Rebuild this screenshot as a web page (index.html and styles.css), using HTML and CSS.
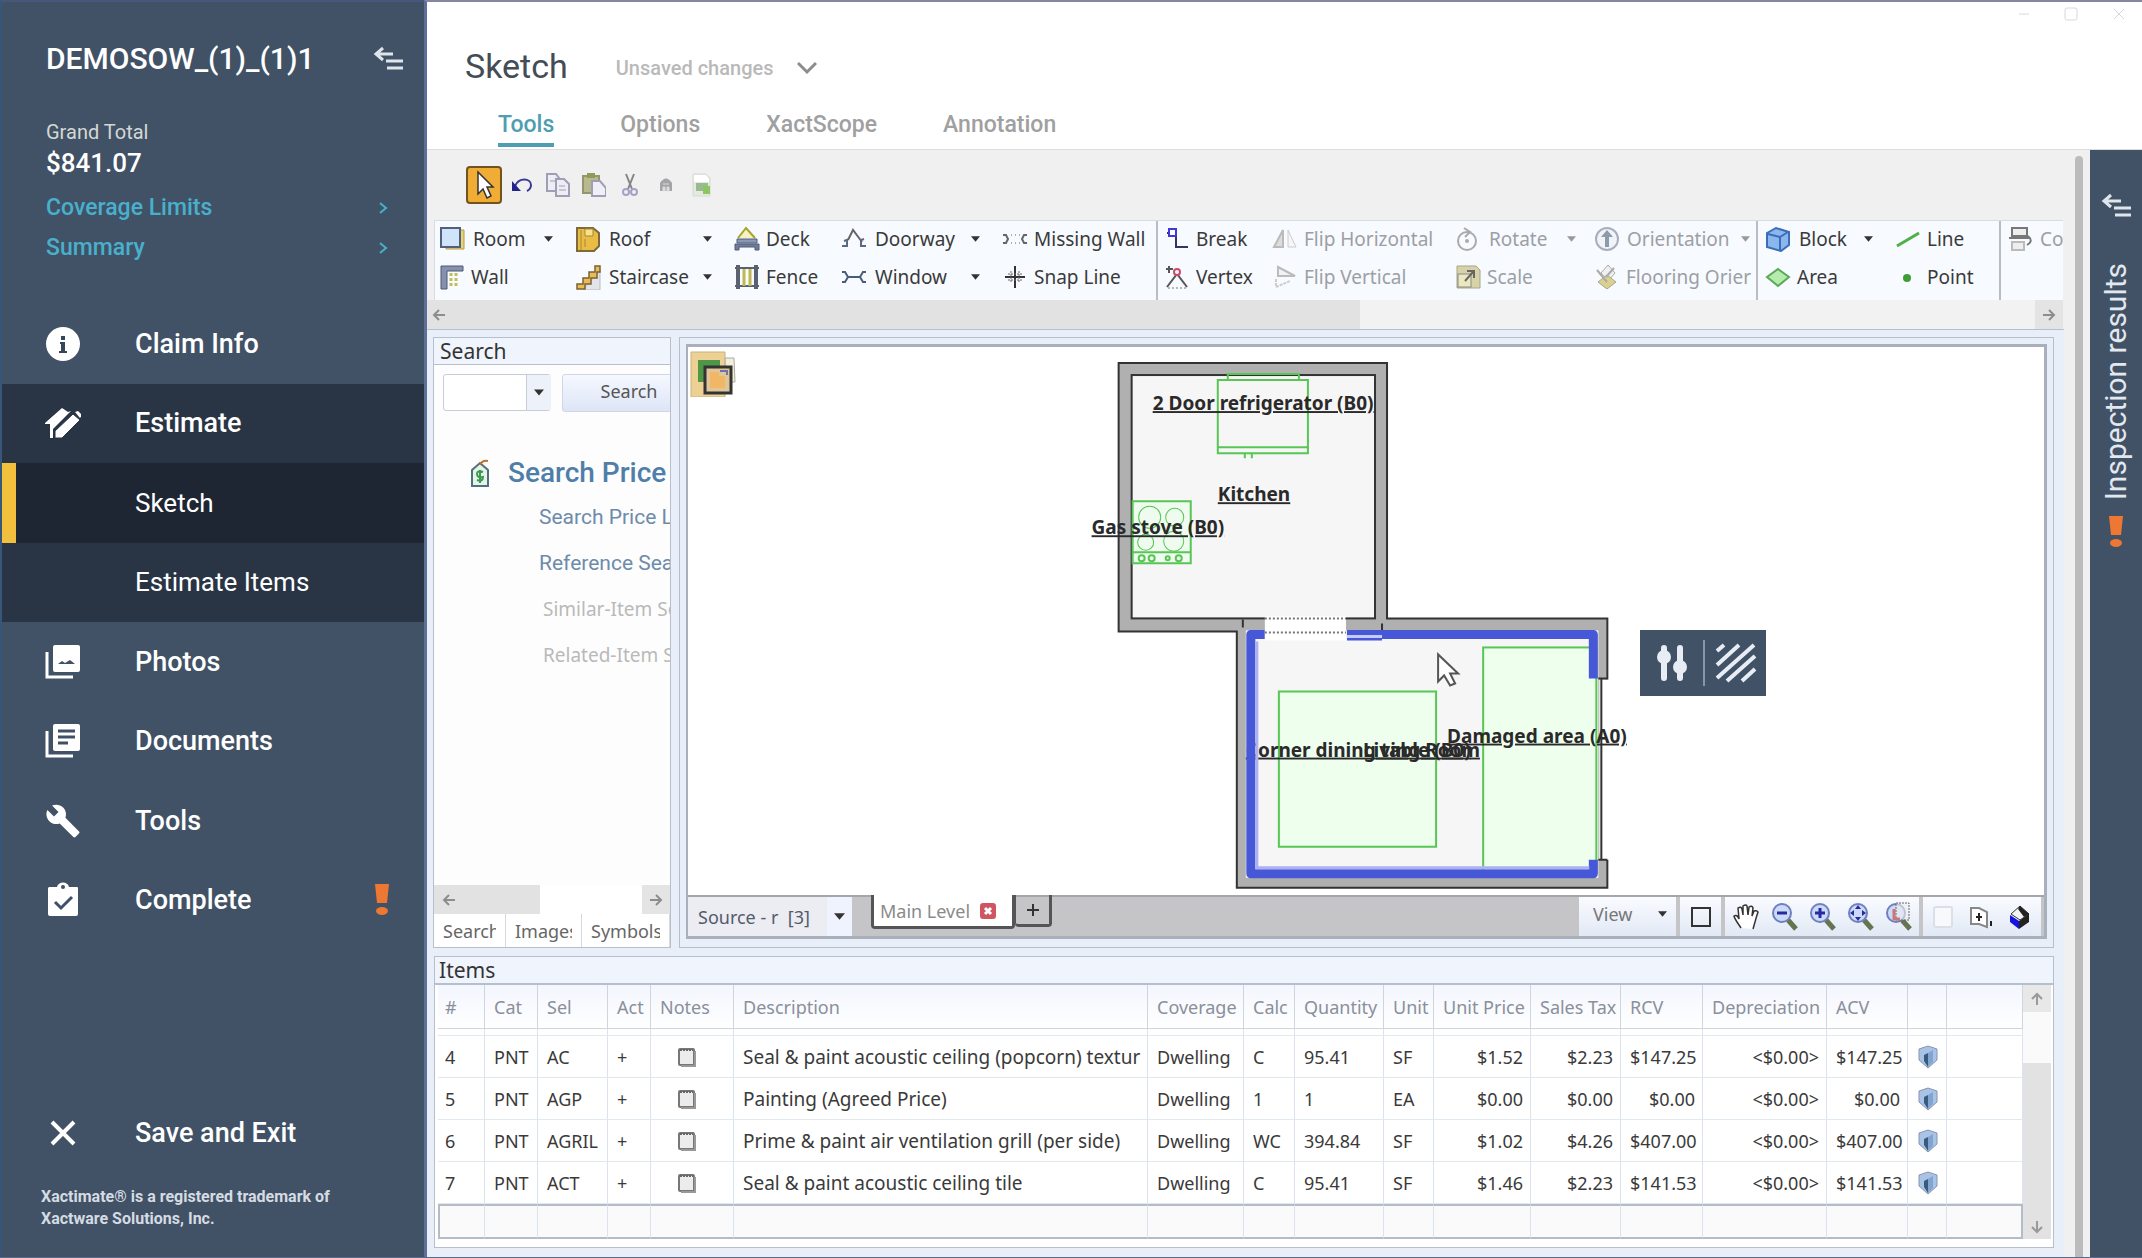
FILE: index.html
```html
<!DOCTYPE html>
<html lang="en">
<head>
<meta charset="utf-8">
<title>Sketch - DEMOSOW_(1)_(1)1</title>
<link rel="stylesheet" href="styles.css">
</head>
<body>
<svg class="defs" aria-hidden="true">
  <symbol id="caret" viewBox="0 0 10 6"><path d="M0 0h10L5 6z" fill="currentColor"/></symbol>
  <symbol id="chev" viewBox="0 0 10 12"><path d="M2 1l6 5-6 5" fill="none" stroke="currentColor" stroke-width="2"/></symbol>
  <symbol id="arrow" viewBox="0 0 14 12"><path d="M13 6H2M7 1L2 6l5 5" fill="none" stroke="currentColor" stroke-width="2"/></symbol>
  <symbol id="collapse" viewBox="0 0 30 24"><path d="M3 8h17M10 2L3 8l7 6M13 15h17M14 22h16" fill="none" stroke="currentColor" stroke-width="3"/></symbol>
  <symbol id="bang" viewBox="0 0 14 32"><path d="M0 0h14l-2 19H2z" fill="#ee7733"/><ellipse cx="7" cy="27" rx="6" ry="4" fill="#ee7733"/></symbol>
  <symbol id="note" viewBox="0 0 20 20"><rect x="2" y="2" width="15" height="16" rx="1" fill="#ececec" stroke="#777" stroke-width="2"/><path d="M18 4v15H4" fill="none" stroke="#999" stroke-width="2"/><path d="M3 3h13" stroke="#666" stroke-width="2" stroke-dasharray="2 1"/></symbol>
  <symbol id="shield" viewBox="0 0 20 24"><path d="M10 1L1 4v11l9 8 9-8V4z" fill="#a9c3e6" stroke="#8a94b5"/><path d="M10 8L6 10v6l4 6z" fill="#3a5a7c"/><path d="M10 8l5-3v12l-5 5z" fill="#7fa5d0"/></symbol>
  <symbol id="lens" viewBox="0 0 28 30"><path d="M18 18l8 9" stroke="#66754f" stroke-width="5"/><circle cx="12" cy="11" r="9" fill="#cbdaf7" stroke="#6f7fc0" stroke-width="2"/></symbol>
</svg>

<aside class="side">
  <div class="side-head">
    <h1>DEMOSOW_(1)_(1)1</h1>
    <button class="bare" aria-label="Collapse menu"><svg width="30" height="24"><use href="#collapse"/></svg></button>
  </div>
  <div class="total-label">Grand Total</div>
  <div class="total">$841.07</div>
  <div class="side-links">
    <a href="#coverage">Coverage Limits<svg width="10" height="12"><use href="#chev"/></svg></a>
    <a href="#summary">Summary<svg width="10" height="12"><use href="#chev"/></svg></a>
  </div>
  <nav class="nav">
    <a href="#claim"><svg viewBox="0 0 36 36"><circle cx="18" cy="18" r="17" fill="#fff"/><path d="M16 10h4v4h-4zM15 16h5v9h2v2h-8v-2h2v-7h-1z" fill="#34465a"/></svg><span>Claim Info</span></a>
    <a href="#estimate" class="open"><svg viewBox="0 0 36 36"><path d="M0 18L17 3l6 4 3-1-18 18v9H5V19H0z" fill="#fff"/><path d="M10 33v-7L28 9l7 6-18 18z" fill="#fff" stroke="#293545" stroke-width="1"/><path d="M30 7l3-1 4 4-2 3z" fill="#fff"/></svg><span>Estimate</span></a>
    <a href="#sketch" class="sub current" aria-current="page"><span>Sketch</span></a>
    <a href="#items" class="sub open"><span>Estimate Items</span></a>
    <a href="#photos"><svg viewBox="0 0 36 36"><path d="M2 8v25h26" fill="none" stroke="#fff" stroke-width="3"/><rect x="8" y="1" width="27" height="27" rx="2" fill="#fff"/><path d="M13 20l4-3 3 2 5-3 5 4z" fill="#3f5166"/></svg><span>Photos</span></a>
    <a href="#documents"><svg viewBox="0 0 36 36"><path d="M2 8v25h26" fill="none" stroke="#fff" stroke-width="3"/><rect x="8" y="1" width="27" height="27" rx="2" fill="#fff"/><path d="M13 8h17M13 14h17M13 20h10" stroke="#3f5166" stroke-width="3"/></svg><span>Documents</span></a>
    <a href="#tools"><svg viewBox="0 0 24 24"><path d="M22.700 19l-9.100-9.100c.9-2.300.4-5-1.500-6.900-2-2-5-2.400-7.400-1.300L9 6 6 9 1.600 4.700C.4 7.100.9 10.100 2.900 12.100c1.900 1.900 4.600 2.400 6.900 1.500l9.100 9.100c.4.4 1 .4 1.400 0l2.300-2.300c.5-.4.5-1.100.1-1.400z" fill="#fff"/></svg><span>Tools</span></a>
    <a href="#complete"><svg viewBox="0 0 36 36"><path d="M4 5h8c1-6 11-6 12 0h8q1 0 1 1v26q0 2-2 2H5q-2 0-2-2V6z" fill="#fff"/><circle cx="18" cy="5" r="2" fill="#3f5166"/><path d="M10 20l6 6 11-11" fill="none" stroke="#3f5166" stroke-width="3"/></svg><span>Complete</span><svg class="warn" viewBox="0 0 14 32"><use href="#bang"/></svg></a>
  </nav>
  <div class="side-foot">
    <a href="#exit" class="exit"><svg viewBox="0 0 36 36"><path d="M7 7l22 22M29 7L7 29" stroke="#fff" stroke-width="4"/></svg><span>Save and Exit</span></a>
    <p>Xactimate® is a registered trademark of<br>Xactware Solutions, Inc.</p>
  </div>
</aside>

<div class="app">
  <header class="top">
    <div class="win"><button aria-label="Minimize"><svg width="12" height="14"><path d="M1 7h10"/></svg></button><button aria-label="Maximize"><svg width="14" height="14"><rect x="1" y="1" width="12" height="12" rx="2"/></svg></button><button aria-label="Close"><svg width="14" height="14"><path d="M2 2l10 10M12 2L2 12"/></svg></button></div>
    <div class="title"><h2>Sketch</h2><button class="unsaved">Unsaved changes<svg width="20" height="14" viewBox="0 0 20 14"><path d="M1 2l9 9 9-9" fill="none" stroke="#8c8c8c" stroke-width="3"/></svg></button></div>
    <nav class="tabs"><a href="#t" class="on">Tools</a><a href="#o">Options</a><a href="#x">XactScope</a><a href="#a">Annotation</a></nav>
  </header>

  <div class="body">
    <main class="content">
      <div class="quick">
        <button class="pick" aria-label="Select"><svg width="22" height="30" viewBox="0 0 22 30"><path d="M5 2v22l5-5 4 9 4-2-4-9h6z" fill="#fff" stroke="#333" stroke-width="1.500"/></svg></button>
        <button aria-label="Undo"><svg viewBox="0 0 24 24"><path d="M5 13C9 4 21 5 21 12q0 4-4 6" fill="none" stroke="#3a3a92" stroke-width="2"/><path d="M2 8v10h9z" fill="#23238a"/></svg></button>
        <button aria-label="Copy"><svg viewBox="0 0 24 24" fill="#ededf5" stroke="#a19db5" stroke-width="2"><path d="M1 1h9l3 4v13H1z"/><path d="M10 6h8l5 5v12H10z"/><path d="M13 13h6M13 17h7M4 8h5" stroke-width="1"/></svg></button>
        <button aria-label="Paste"><svg viewBox="0 0 24 24" stroke-width="2"><rect x="1" y="3" width="16" height="17" fill="#b9b98f" stroke="#96966e"/><rect x="5" y="0" width="8" height="5" fill="#8d9c5b"/><path d="M10 8h8l6 7v8H10z" fill="#efeff8" stroke="#a19db5"/></svg></button>
        <button aria-label="Cut"><svg viewBox="0 0 24 24" fill="none" stroke-width="2"><path d="M8 1l6 15M16 1l-6 15" stroke="#858585"/><circle cx="8" cy="19" r="3" stroke="#a7a0c8"/><circle cx="16" cy="19" r="3" stroke="#a7a0c8"/></svg></button>
        <button aria-label="Find"><svg viewBox="0 0 24 24"><path d="M6 18V10q6-9 12 0v8z" fill="#a3a3a8"/><path d="M9 18v-4h2v4zM13 18v-4h2v4zM9 11h6" fill="#ddd" stroke="#ddd"/></svg></button>
        <button aria-label="Export"><svg viewBox="0 0 24 24"><path d="M3 1h13l4 4v18H3z" fill="#e6e9e2" stroke="#d6dacf"/><path d="M4 2h12l3 4v3H4z" fill="#fff"/><rect x="6" y="10" width="12" height="8" fill="#9aba93"/><path d="M13 13h7v8h-7z" fill="#8cc662"/></svg></button>
      </div>

      <div class="ribbon">
        <div class="group g1">
          <button><svg viewBox="0 0 26 26"><path d="M7 4h18v19H7z" fill="#e8d27a" stroke="#b79a3a"/><rect x="2" y="2" width="19" height="19" fill="#cfe3fa" stroke="#51607c" stroke-width="2"/></svg>Room<svg class="dd"><use href="#caret"/></svg></button>
          <button><svg viewBox="0 0 26 26"><path d="M2 2h16l6 5v13l-5 5H2z" fill="#e9bd45" stroke="#7d6a38" stroke-width="2"/><path d="M10 3v7h8V3zM10 13v8M6 4v20" fill="#fae28d" stroke="#a88633"/></svg>Roof<svg class="dd"><use href="#caret"/></svg></button>
          <button><svg viewBox="0 0 26 26"><path d="M4 12l8-10 9 10" fill="#f5f3c2" stroke="#a6a42c" stroke-width="2"/><path d="M3 13h20v4H3z" fill="#8b99b5" stroke="#4f5d7a"/><path d="M1 18h24v6h-4v-3H5v3H1z" fill="#6f7d9a" stroke="#4f5d7a"/></svg>Deck</button>
          <button><svg viewBox="0 0 26 26" fill="none" stroke-width="2"><path d="M1 20h5v-6l-3 1M25 20h-5v-6l3-1" stroke="#5a6a80"/><path d="M7 14l5-10 9 12" stroke="#666"/></svg>Doorway<svg class="dd"><use href="#caret"/></svg></button>
          <button><svg viewBox="0 0 26 26" fill="none" stroke="#666" stroke-width="2"><path d="M1 9h3l2 4-2 4H1M25 9h-3l-2 4 2 4h3"/><path d="M9 9h9M9 17h9" stroke-dasharray="1 3" stroke-width="1"/></svg>Missing Wall</button>
          <button><svg viewBox="0 0 26 26"><path d="M2 2h22v5H8v18H2z" fill="#8591ae" stroke="#4e5973"/><path d="M12 9v15M17 9v15" stroke="#c6bb5a" stroke-width="3" stroke-dasharray="3 2"/></svg>Wall</button>
          <button><svg viewBox="0 0 26 26"><path d="M8 26h17V6z" fill="#e3e3ea" stroke="#bbb"/><path d="M2 20h6v-6h6V8h6V2h5v6h-3v6h-6v6h-6v5H2z" fill="#e9bd55" stroke="#7d6033" stroke-width="1.500"/></svg>Staircase<svg class="dd"><use href="#caret"/></svg></button>
          <button><svg viewBox="0 0 26 26"><path d="M4 1v24M22 1v24" stroke="#5a6270" stroke-width="4"/><path d="M1 4h24M1 22h24" stroke="#5a6270" stroke-width="2"/><path d="M10 5v17M16 5v17" stroke="#bdb850" stroke-width="3"/></svg>Fence</button>
          <button><svg viewBox="0 0 26 26" fill="none" stroke="#4b5c78" stroke-width="2"><path d="M1 8h3l3 5-3 5H1M25 8h-3l-3 5 3 5h3M7 13h12"/></svg>Window<svg class="dd"><use href="#caret"/></svg></button>
          <button><svg viewBox="0 0 26 26"><path d="M13 2v22M3 13h20" stroke="#333" stroke-width="2"/><path d="M9 7v12M17 7v12M6 10h14M6 16h14" stroke="#666" stroke-dasharray="2 1"/></svg>Snap Line</button>
        </div>
        <div class="group g2">
          <button><svg viewBox="0 0 26 26"><path d="M3 7h9v14h12" fill="none" stroke="#333366" stroke-width="2"/><rect x="5" y="3" width="7" height="7" fill="#fff" stroke="#4038d4" stroke-width="2"/></svg>Break</button>
          <button disabled><svg viewBox="0 0 26 26"><path d="M11 4v17H2z" fill="#ddd" stroke="#bbb" stroke-width="2"/><path d="M16 4l8 17h-8z" fill="#f6f6f6" stroke="#ccc"/></svg>Flip Horizontal</button>
          <button disabled><svg viewBox="0 0 26 26" fill="none" stroke="#aaa" stroke-width="2"><circle cx="12" cy="15" r="9"/><path d="M9 2l6 4-5 5"/><circle cx="12" cy="15" r="1"/></svg>Rotate<svg class="dd"><use href="#caret"/></svg></button>
          <button disabled><svg viewBox="0 0 26 26"><circle cx="13" cy="13" r="11" fill="#f0f3f8" stroke="#a8aebd" stroke-width="2"/><path d="M13 4l6 7h-4v10h-4V11H7z" fill="#8b9baa"/></svg>Orientation<svg class="dd"><use href="#caret"/></svg></button>
          <button><svg viewBox="0 0 26 26" fill="none" stroke-width="2"><path d="M3 23L13 10l10 13M2 5h7M5 2v7" stroke="#555"/><path d="M4 24h19" stroke="#777" stroke-width="1" stroke-dasharray="2 2"/><circle cx="13" cy="8" r="3" fill="#fff" stroke="#d04868"/></svg>Vertex</button>
          <button disabled><svg viewBox="0 0 26 26" stroke-width="2"><path d="M6 3l17 9H6z" fill="#f2f2f2" stroke="#bbb"/><path d="M4 15v8l14-6" fill="none" stroke="#ccc" stroke-dasharray="3 1"/></svg>Flip Vertical</button>
          <button disabled><svg viewBox="0 0 26 26"><path d="M2 2h19l4 4v18H2z" fill="#d8d2a9" stroke="#a9a488"/><rect x="3" y="10" width="13" height="13" fill="#ede7c0" stroke="#888"/><path d="M10 17l8-9M12 7h7v7" fill="none" stroke="#666" stroke-width="2"/></svg>Scale</button>
          <button disabled><svg viewBox="0 0 26 26"><path d="M14 1l7 8-7 8-7-8z" fill="#f0f0f0" stroke="#aaa"/><path d="M13 11l9 7-9 7-9-7z" fill="#dcd08f" stroke="#aaa590"/><path d="M3 6l10 12M20 4l-8 9" stroke="#aaa" stroke-width="2"/></svg>Flooring Orier</button>
        </div>
        <div class="group g3">
          <button><svg viewBox="0 0 26 26"><path d="M2 7l9-5 13 4v13l-8 6-14-4z" fill="#8bb6ee" stroke="#3b6eb8" stroke-width="2"/><path d="M15 10v14M3 8l12 3 8-5" fill="none" stroke="#3b6eb8" stroke-width="2"/></svg>Block<svg class="dd"><use href="#caret"/></svg></button>
          <button><svg viewBox="0 0 26 26"><path d="M2 20L24 7" stroke="#51b04a" stroke-width="3"/></svg>Line</button>
          <button><svg viewBox="0 0 26 26"><path d="M13 5l11 8-11 9L2 13z" fill="#b5ecab" stroke="#5aa85a" stroke-width="2"/></svg>Area</button>
          <button><svg viewBox="0 0 26 26"><circle cx="12" cy="14" r="4" fill="#3f9d35"/></svg>Point</button>
        </div>
        <div class="group g4">
          <button disabled><svg viewBox="0 0 26 26" fill="#eee" stroke="#777" stroke-width="2"><rect x="4" y="2" width="15" height="8"/><path d="M1 12h20M20 10q6 5-1 9" fill="none"/><rect x="4" y="16" width="12" height="8" stroke="#bbb"/></svg>Co</button>
        </div>
      </div>
      <div class="hbar"><span class="thumb"><svg width="14" height="12"><use href="#arrow"/></svg></span><span class="end"><svg class="flip" width="14" height="12"><use href="#arrow"/></svg></span></div>

      <div class="work">
        <div class="upper">
          <section class="finder">
            <h3>Search</h3>
            <div class="query">
              <div class="combo"><select aria-label="Search text"><option></option></select><svg class="dd"><use href="#caret"/></svg></div>
              <button>Search</button>
            </div>
            <div class="results">
              <h4><svg width="18" height="28" viewBox="0 0 18 28"><path d="M1 11l8-7 8 7v16H1z" fill="#e6f3e6" stroke="#50717f" stroke-width="2"/><path d="M9 6q2-5 8-4" fill="none" stroke="#b87333" stroke-width="2"/><path d="M12 13q-6-2-6 2t6 3q0 5-6 3M9 11v13" fill="none" stroke="#3a9a51" stroke-width="2"/></svg>Search Price</h4>
              <a href="#spl">Search Price List</a>
              <a href="#ref">Reference Search</a>
              <a class="off">Similar-Item Search</a>
              <a class="off">Related-Item Search</a>
            </div>
            <div class="hbar small"><span class="thumb"><svg width="14" height="12"><use href="#arrow"/></svg></span><span class="end"><svg class="flip" width="14" height="12"><use href="#arrow"/></svg></span></div>
            <div class="ftabs"><button class="on"><span>Search</span></button><button><span>Images</span></button><button><span>Symbols</span></button></div>
          </section>

          <section class="stage">
            <div class="frame">
              <div class="canvas">
                <svg class="plan" viewBox="689 346 1354 553" preserveAspectRatio="xMinYMin slice">
                  <path d="M1119 362H1387V617H1607V886H1237V630H1119Z" fill="#b0b0b0" stroke="#333" stroke-width="2"/>
                  <rect x="1132" y="374" width="243" height="243" fill="#f6f6f6" stroke="#333" stroke-width="2"/>
                  <rect x="1246" y="629" width="352" height="247" fill="#f6f6f6"/>
                  <path d="M1243 618v8M1382 622v7" stroke="#333" stroke-width="2"/>
                  <rect x="1599" y="678" width="12" height="180" fill="#fff"/>
                  <path d="M1598 677h9M1598 858h9M1601 678v180" stroke="#333" stroke-width="2"/>
                  <g stroke="#57c655" stroke-width="2" fill="none">
                    <path d="M1218 379h90v73h-90zM1218 446h90M1228 379v-6h71v6" />
                    <path d="M1245 452v5M1252 452v5"/>
                    <path d="M1133 500h58v62h-58z" fill="#eefbee"/><path d="M1133 551h58"/>
                    <g stroke-width="1"><circle cx="1150" cy="516" r="11"/><circle cx="1175" cy="516" r="9"/><circle cx="1146" cy="541" r="8"/><circle cx="1174" cy="540" r="10"/></g>
                    <circle cx="1142" cy="557" r="3"/><circle cx="1152" cy="557" r="3"/><circle cx="1168" cy="557" r="2"/><circle cx="1179" cy="557" r="3"/>
                    <rect x="1279" y="690" width="157" height="155" fill="#eeffee"/>
                    <rect x="1483" y="646" width="113" height="225" fill="#eeffee"/>
                  </g>
                  <text x="1246" y="755">Corner dining table (B0)</text>
                  <path d="M1265 633H1251V872H1593V858M1347 633H1593V677" fill="none" stroke="#4657d8" stroke-width="9" stroke-linejoin="round"/>
                  <path d="M1257 640V866H1589" fill="none" stroke="#aab2ef" stroke-width="3"/>
                  <path d="M1347 635h35" stroke="#c6cbf5" stroke-width="3"/>
                  <path d="M1347 638h35" stroke="#4657d8" stroke-width="2"/>
                  <rect x="1265" y="615" width="81" height="24" fill="#fff"/>
                  <path d="M1265 617h81M1265 631h81" stroke="#777" stroke-width="2" stroke-dasharray="2 2"/>
                  <text x="1153" y="409">2 Door refrigerator (B0)</text>
                  <text x="1218" y="500">Kitchen</text>
                  <text x="1092" y="533">Gas stove (B0)</text>
                  <text x="1363" y="755">Living Room</text>
                  <text x="1447" y="741">Damaged area (A0)</text>
                  <path d="M1438 653v27l6-6 6 10 5-2-5-10h8z" fill="#fff" stroke="#555" stroke-width="2"/>
                </svg>
                <button class="layers" aria-label="Layers"><svg width="46" height="46" viewBox="0 0 46 46"><path d="M1 1h34v45H1z" fill="#ecd094" stroke="#c8b27d"/><path d="M35 7h9l1 24h-9z" fill="#f3eed6" stroke="#aaa"/><rect x="8" y="9" width="22" height="22" fill="#4f9645"/><rect x="15" y="16" width="26" height="26" fill="#dfc69a" stroke="#333" stroke-width="3"/><path d="M20 21h9v4h6v12H20z" fill="#f2b765"/><path d="M30 20h7v4" fill="none" stroke="#6775a8" stroke-width="2"/></svg></button>
                <div class="float">
                  <button aria-label="Adjust"><svg width="32" height="36" viewBox="0 0 32 36"><path d="M8 3v30M24 3v30" stroke="#e8edf5" stroke-width="6" stroke-linecap="round"/><circle cx="8" cy="12" r="7" fill="#e8edf5"/><circle cx="24" cy="22" r="7" fill="#e8edf5"/></svg></button>
                  <button aria-label="Hatch"><svg width="42" height="40" viewBox="0 0 42 40"><path d="M2 8l7-6M2 22L24 2M2 35L39 2M12 38L40 13M27 38l13-12" stroke="#e8edf5" stroke-width="4"/></svg></button>
                </div>
              </div>
              <div class="status">
                <div class="source"><select aria-label="Source"><option>Source - r&nbsp; [3]</option></select><svg class="dd"><use href="#caret"/></svg></div>
                <div class="level"><a href="#main">Main Level</a><button aria-label="Close level"><svg width="16" height="16" viewBox="0 0 16 16"><rect width="16" height="16" rx="3" fill="#cf5560"/><path d="M5 5l6 6M11 5l-6 6" stroke="#fff" stroke-width="3"/></svg></button></div>
                <button class="plus" aria-label="Add level"><svg width="12" height="12"><path d="M6 0v12M0 6h12" stroke="#333" stroke-width="2"/></svg></button>
                <div class="views">
                  <button class="view">View<svg class="dd"><use href="#caret"/></svg></button>
                  <div><button aria-label="Frame"><svg width="22" height="22"><rect x="2" y="2" width="18" height="18" fill="none" stroke="#333" stroke-width="2"/></svg></button></div>
                  <div>
                    <button aria-label="Pan"><svg width="28" height="30" viewBox="0 0 28 30"><path d="M9 26C6 21 3 18 2 14q3-2 5 3L6 6q3-2 4 1l1 6V4q3-2 4 0l1 9 1-8q3-2 4 1l-1 8 2-5q3-1 4 1-2 6-3 10l-2 7" fill="#fff" stroke="#333" stroke-width="1.500"/></svg></button>
                    <button aria-label="Zoom out"><svg width="28" height="30"><use href="#lens"/><path d="M7 11h10" stroke="#2a2aa0" stroke-width="3"/></svg></button>
                    <button aria-label="Zoom in"><svg width="28" height="30"><use href="#lens"/><path d="M7 11h10M12 6v10" stroke="#2a2aa0" stroke-width="3"/></svg></button>
                    <button aria-label="Zoom extents"><svg width="28" height="30"><use href="#lens"/><path d="M12 3l3 4H9zM12 19l3-4H9zM4 11l4-3v6zM20 11l-4-3v6z" fill="#2a2aa0"/></svg></button>
                    <button aria-label="Zoom window"><svg width="28" height="30"><use href="#lens"/><path d="M12 1h13v17H12z" fill="#eee" fill-opacity=".6" stroke="#666" stroke-dasharray="2 1"/><path d="M10 7v10h6" stroke="#c77" stroke-width="3" fill="none"/></svg></button>
                  </div>
                  <div>
                    <button aria-label="Plane" disabled><svg width="22" height="24"><rect x="2" y="2" width="18" height="20" rx="2" fill="#f7f9fc" stroke="#dbe0e8" stroke-width="2"/></svg></button>
                    <button aria-label="Elevation"><svg width="24" height="24"><path d="M2 3h8l8 4v15l-8-3H2z" fill="#fff" stroke="#888" stroke-width="2"/><path d="M10 8v8M7 12h6M22 16v5" stroke="#222" stroke-width="2"/></svg></button>
                    <button aria-label="3D"><svg width="24" height="24"><path d="M12 1l9 8-9 6-9-6z" fill="#f4f4f4" stroke="#333"/><path d="M2 10l9 6v8l-9-7z" fill="#1414e0"/><path d="M11 16l10-7v8l-10 7zM12 1l9 8-5 3-6-8z" fill="#222"/></svg></button>
                  </div>
                </div>
              </div>
            </div>
          </section>
        </div>

        <section class="items">
          <h3>Items</h3>
          <div class="grid">
            <table>
              <colgroup><col class="w47"><col class="w53"><col class="w70"><col class="w43"><col class="w83"><col><col class="w96"><col class="w51"><col class="w89"><col class="w50"><col class="w97"><col class="w90"><col class="w82"><col class="w124"><col class="w81"><col class="w39"><col class="w76"></colgroup>
              <thead><tr><th>#</th><th>Cat</th><th>Sel</th><th>Act</th><th>Notes</th><th>Description</th><th>Coverage</th><th>Calc</th><th>Quantity</th><th>Unit</th><th>Unit Price</th><th>Sales Tax</th><th>RCV</th><th>Depreciation</th><th>ACV</th><th></th><th></th></tr></thead>
              <tbody>
                <tr class="edge"><td></td><td></td><td></td><td></td><td></td><td></td><td></td><td></td><td></td><td></td><td></td><td></td><td></td><td></td><td></td><td></td><td></td></tr>
                <tr><td>4</td><td>PNT</td><td>AC</td><td>+</td><td class="n"><svg width="20" height="20"><use href="#note"/></svg></td><td class="d">Seal &amp; paint acoustic ceiling (popcorn) textur</td><td>Dwelling</td><td>C</td><td>95.41</td><td>SF</td><td class="r">$1.52</td><td class="r">$2.23</td><td class="r">$147.25</td><td class="r">&lt;$0.00&gt;</td><td class="r">$147.25</td><td class="c"><svg width="20" height="24"><use href="#shield"/></svg></td><td></td></tr>
                <tr><td>5</td><td>PNT</td><td>AGP</td><td>+</td><td class="n"><svg width="20" height="20"><use href="#note"/></svg></td><td class="d">Painting (Agreed Price)</td><td>Dwelling</td><td>1</td><td>1</td><td>EA</td><td class="r">$0.00</td><td class="r">$0.00</td><td class="r">$0.00</td><td class="r">&lt;$0.00&gt;</td><td class="r">$0.00</td><td class="c"><svg width="20" height="24"><use href="#shield"/></svg></td><td></td></tr>
                <tr><td>6</td><td>PNT</td><td>AGRIL</td><td>+</td><td class="n"><svg width="20" height="20"><use href="#note"/></svg></td><td class="d">Prime &amp; paint air ventilation grill (per side)</td><td>Dwelling</td><td>WC</td><td>394.84</td><td>SF</td><td class="r">$1.02</td><td class="r">$4.26</td><td class="r">$407.00</td><td class="r">&lt;$0.00&gt;</td><td class="r">$407.00</td><td class="c"><svg width="20" height="24"><use href="#shield"/></svg></td><td></td></tr>
                <tr><td>7</td><td>PNT</td><td>ACT</td><td>+</td><td class="n"><svg width="20" height="20"><use href="#note"/></svg></td><td class="d">Seal &amp; paint acoustic ceiling tile</td><td>Dwelling</td><td>C</td><td>95.41</td><td>SF</td><td class="r">$1.46</td><td class="r">$2.23</td><td class="r">$141.53</td><td class="r">&lt;$0.00&gt;</td><td class="r">$141.53</td><td class="c"><svg width="20" height="24"><use href="#shield"/></svg></td><td></td></tr>
                <tr class="blank"><td></td><td></td><td></td><td></td><td></td><td></td><td></td><td></td><td></td><td></td><td></td><td></td><td></td><td></td><td></td><td></td><td></td></tr>
              </tbody>
            </table>
            <div class="vbar"><span class="up"><svg class="north" width="14" height="12"><use href="#arrow"/></svg></span><span class="vthumb"><svg class="south" width="14" height="12"><use href="#arrow"/></svg></span></div>
          </div>
        </section>
      </div>
    </main>
    <div class="pagebar"></div>
    <aside class="rail">
      <button class="bare" aria-label="Expand results"><svg width="30" height="24"><use href="#collapse"/></svg></button>
      <span class="rail-text">Inspection results</span>
      <svg width="14" height="32"><use href="#bang"/></svg>
    </aside>
  </div>
</div>
</body>
</html>
```
FILE: styles.css
```css
* { box-sizing: border-box; }
body {
  margin: 0;
  min-height: 100vh;
  display: grid;
  grid-template-columns: 424px minmax(0, 1fr);
  font-family: "Noto Sans", "Open Sans", sans-serif;
  font-size: 18px;
  color: #3a3a3a;
  background: #fff;
  border-bottom: 1px solid #5a6a88;
}
h1, h2, h3, h4, p { margin: 0; font-weight: 400; }
a { color: inherit; text-decoration: none; }
button, select { font: inherit; color: inherit; background: none; border: 0; padding: 0; margin: 0; }
svg { display: block; flex: none; }
.defs { position: absolute; width: 0; height: 0; }
.flip { transform: rotate(180deg); }
.north { transform: rotate(90deg); }
.south { transform: rotate(270deg); }
.dd { width: 9px; height: 6px; color: #333; }

/* Sidebar */
.side {
  display: flex;
  flex-direction: column;
  background: #415266;
  border-top: 2px solid #46587a;
  border-left: 2px solid #38557a;
  color: #fff;
  font-family: Roboto, sans-serif;
}
.side-head { display: flex; justify-content: space-between; align-items: center; height: 40px; margin: 36px 21px 41px 44px; }
.side-head h1 { font-size: 30px; font-weight: 500; }
.bare { color: #dfe5ec; }
.total-label { margin-left: 44px; font-size: 20px; line-height: 26px; color: #d4d8d4; }
.total { margin-left: 44px; font-size: 26px; line-height: 36px; font-weight: 500; }
.side-links { margin: 7px 36px 36px 44px; color: #49b0cc; font-size: 23px; font-weight: 500; line-height: 40px; }
.side-links a { display: flex; justify-content: space-between; align-items: center; }
.nav { display: grid; grid-auto-rows: 1fr; height: 636px; }
.nav a, .exit { display: flex; align-items: center; gap: 54px; padding: 0 35px 0 43px; font-size: 27px; font-weight: 500; }
.nav svg, .exit svg { width: 36px; height: 36px; }
.nav .warn { width: 14px; height: 32px; margin-left: auto; }
.nav .open { background: #293545; }
.nav .sub { padding-left: 133px; font-size: 26px; font-weight: 400; }
.nav .current { background: #1d2632; border-left: 14px solid #f2c03c; padding-left: 119px; }
.side-foot { margin-top: auto; }
.exit { height: 80px; }
.side-foot p { margin: 13px 0 27px 39px; font-size: 16px; line-height: 22px; font-weight: 700; color: #d5dbe2; }

/* Header */
.app { display: flex; flex-direction: column; min-width: 0; border-left: 3px solid #5c6f96; border-top: 2px solid #8486a4; }
.top { height: 148px; display: flex; flex-direction: column; background: #fff; border-bottom: 1px solid #ddd; font-family: Roboto, sans-serif; }
.win { display: flex; justify-content: flex-end; align-items: flex-start; gap: 34px; height: 26px; padding: 5px 16px 0 0; }
.win svg { fill: none; stroke: #d8d8d8; stroke-width: 1; }
.title { display: flex; align-items: center; gap: 48px; height: 76px; padding-left: 38px; }
.title h2 { font-size: 34px; color: #444c56; }
.unsaved { display: flex; align-items: center; gap: 24px; font-size: 20px; font-weight: 500; color: #b9b9b9; padding-top: 4px; }
.tabs { display: flex; gap: 66px; padding-left: 71px; font-size: 23px; font-weight: 500; line-height: 42px; color: #a0a0a0; }
.tabs a { height: 43px; }
.tabs .on { color: #4f9db0; border-bottom: 4px solid #4f9db0; }

/* Body */
.body { flex: 1; display: flex; background: #f0f0f0; }
.content { flex: 1; min-width: 0; display: flex; flex-direction: column; }
.pagebar { width: 8px; margin: 6px 7px 0 0; background: #bcbcbc; border-radius: 4px 4px 0 0; }
.rail { width: 52px; background: #415266; display: flex; flex-direction: column; align-items: center; padding-top: 43px; color: #e2e8f0; font-family: Roboto, sans-serif; }
.rail-text { writing-mode: vertical-rl; transform: rotate(180deg); font-size: 30px; line-height: 32px; margin: 46px 0 16px; }

.quick { display: flex; align-items: center; height: 70px; padding-left: 39px; gap: 12px; }
.quick svg { width: 24px; height: 24px; }
.pick { width: 36px; height: 38px; display: grid; place-items: center; background: #f0ac35; border: 2px solid #71531f; border-radius: 4px; margin-right: -4px; }
.quick .pick svg { width: 22px; height: 30px; }

.ribbon { display: flex; height: 80px; margin: 0 12px 0 7px; overflow: hidden; background: #f7faff; border: 1px solid #d8dbe2; border-bottom: 0; border-right: 0; }
.group { display: grid; grid-template-rows: 35px 42px; flex: none; padding-left: 4px; border-right: 2px solid #b9bcc4; font-size: 19px; }
.g1 { grid-template-columns: 136px 159px 107px 161px 154px; }
.g2 { grid-template-columns: 108px 183px 139px 162px; padding-left: 6px; }
.g3 { grid-template-columns: 130px 104px; padding-left: 7px; }
.g4 { grid-template-columns: 56px; padding-left: 7px; border: 0; flex: 1; }
.group button { display: flex; align-items: center; gap: 6px; overflow: hidden; white-space: nowrap; text-align: left; }
.group button:has(.dd) { gap: 8px; padding-right: 22px; }
.group button > svg:first-child { width: 26px; height: 26px; }
.group .dd { margin-left: auto; }
.group button:disabled { color: #9c9fa5; }
.group button:disabled .dd { color: #999; }
.g2 button:has(.dd) { padding-right: 18px; }
.g2 button:nth-child(4) { padding-right: 6px; gap: 7px; }

.hbar { display: flex; justify-content: space-between; height: 29px; margin-right: 12px; background: #f2f2f2; color: #8d8d8d; }
.hbar .thumb { width: 57%; background: #e2e2e2; display: flex; align-items: center; padding-left: 5px; }
.hbar .end { width: 28px; background: #e4e4e4; display: grid; place-items: center; }

.work { flex: 1; display: flex; flex-direction: column; gap: 8px; margin-right: 11px; padding: 7px 10px 9px 6px; background: #e9eff9; border-top: 1px solid #b6bfcc; }
.upper { flex: 1; display: flex; gap: 8px; min-height: 610px; }

.finder { width: 238px; flex: none; display: flex; flex-direction: column; overflow: hidden; background: #fdfdfd; border: 1px solid #b8bfcc; }
.finder h3, .items h3 { height: 27px; line-height: 25px; padding-left: 6px; color: #333; background: #f0f4fd; border-bottom: 1px solid #b8bfcc; flex: none; }
.query { display: flex; gap: 11px; padding: 9px 0 0 9px; height: 48px; }
.combo { position: relative; width: 108px; height: 37px; flex: none; }
.combo select { appearance: none; width: 100%; height: 100%; background: #fff; border: 1px solid #c8ccd6; border-radius: 3px; }
.combo .dd { position: absolute; right: 0; top: 1px; width: 25px; height: 35px; padding: 14px 7px; border-left: 1px solid #c8ccd6; background: #edf1fa; }
.query button { flex: none; width: 140px; padding: 0 6px 4px 0; height: 38px; background: linear-gradient(#f5f8ff, #dde5f6); border: 1px solid #d0d6e4; border-radius: 3px; color: #555; }
.results { flex: 1; padding: 39px 0 0 105px; font-family: Roboto, sans-serif; font-size: 21px; line-height: 46px; color: #6d8baa; white-space: nowrap; }
.results h4 { display: flex; align-items: center; gap: 19px; height: 42px; margin-left: -68px; font-size: 28px; font-weight: 500; color: #4f7ea8; }
.results a { display: block; }
.results .off { color: #b9b9b9; padding-left: 4px; font-family: "Noto Sans", sans-serif; font-size: 19px; }
.hbar.small { margin: 0; background: #fff; }
.hbar.small .thumb { width: 106px; padding-left: 8px; }
.ftabs { display: flex; height: 33px; background: #fff; color: #666; flex: none; }
.ftabs button { width: 76px; flex: none; padding: 0 9px; border-right: 1px solid #d5d9e2; text-align: left; }
.ftabs button:first-child { width: 72px; }
.ftabs button:last-child { width: 88px; }
.ftabs span { display: block; overflow: hidden; white-space: nowrap; }

.stage { flex: 1; min-width: 0; display: flex; padding: 6px 6px 8px; border: 1px solid #b8bfcc; }
.frame { flex: 1; min-width: 0; display: flex; flex-direction: column; border: 3px solid #a9afbd; border-left-width: 2px; background: #fff; }
.canvas { flex: 1; position: relative; min-height: 0; }
.plan { position: absolute; width: 100%; height: 100%; }
.plan text { font-size: 19px; font-weight: 700; text-decoration: underline; fill: #2a2a2a; }
.layers { position: absolute; left: 2px; top: 4px; }
.float { position: absolute; right: 278px; top: 283px; display: flex; align-items: center; height: 66px; background: #415266; }
.float button { width: 63px; height: 46px; display: grid; place-items: center; }
.float button + button { border-left: 2px solid #8795a6; }

.status { display: flex; height: 41px; background: #c5c5c7; border-top: 2px solid #a4a6ac; }
.source { position: relative; width: 164px; background: #ebedf2; }
.source select { appearance: none; width: 100%; height: 100%; padding-left: 10px; color: #555b6b; }
.source .dd { position: absolute; right: 0; top: 0; width: 25px; height: 39px; padding: 16px 7px; background: #eef3fd; pointer-events: none; }
.level { display: flex; align-items: center; gap: 10px; width: 144px; height: 34px; margin-left: 19px; margin-top: -2px; padding-left: 6px; background: #fff; border: 3px solid #555; border-top: 0; border-radius: 0 0 4px 4px; color: #8a8a8a; }
.plus { width: 37px; height: 32px; margin-top: -2px; display: grid; place-items: center; border: solid #555; border-width: 0 3px 3px 1px; border-radius: 0 0 4px 4px; }
.views { display: flex; gap: 4px; margin: 0 3px 0 auto; }
.views > * { display: flex; align-items: center; justify-content: center; background: linear-gradient(#f9fbff, #e2e9f5); }
.views .view { width: 97px; justify-content: space-between; padding: 0 9px 6px 14px; color: #777; }
.views div:nth-child(2) { width: 41px; }
.views div:nth-child(3) { width: 194px; gap: 10px; }
.views div:nth-child(4) { width: 118px; gap: 15px; }

/* Items table */
.items { border: 1px solid #b8bfcc; background: #fff; margin-left: 1px; }
.items h3 { height: 28px; padding-left: 4px; border-bottom: 2px solid #b8bfcc; }
.grid { display: flex; padding: 0 2px 8px 3px; }
table { flex: 1; table-layout: fixed; border-collapse: separate; border-spacing: 0; width: 100%; min-width: 0; }
th, td { padding: 0 7px 0 9px; text-align: left; white-space: nowrap; overflow: hidden; border-right: 1px solid #dbe3ee; border-bottom: 1px solid #e0e8f0; }
th { height: 44px; padding-right: 0; font-weight: 400; color: #8a8f9b; background: linear-gradient(#f3f6fe, #fff); border-color: #cfd4dd; }
td { height: 42px; }
td:first-child, th:first-child { padding-left: 7px; }
.edge td { height: 7px; }
.blank td { height: 35px; background: #fafafa; border-top: 2px solid #b4bcc8; border-bottom: 2px solid #b4bcc8; }
.blank td:first-child { border-left: 2px solid #b4bcc8; }
.blank td:last-child { border-right: 2px solid #b4bcc8; }
.d { font-size: 19px; padding-right: 0; }
.r { text-align: right; }
.c svg, .n svg { margin: 0 auto; }
.n { padding: 0 11px 0 1px; }
.w39 { width: 39px; } .w43 { width: 43px; } .w47 { width: 47px; } .w50 { width: 50px; } .w51 { width: 51px; }
.w53 { width: 53px; } .w70 { width: 70px; } .w76 { width: 76px; } .w81 { width: 81px; } .w82 { width: 82px; }
.w83 { width: 83px; } .w89 { width: 89px; } .w90 { width: 90px; } .w96 { width: 96px; } .w97 { width: 97px; } .w124 { width: 124px; }
.vbar { width: 28px; flex: none; display: flex; flex-direction: column; justify-content: space-between; background: #fafafa; color: #999; }
.up { height: 27px; background: #e8e8e8; display: grid; place-items: center; }
.vthumb { height: 176px; background: #e2e2e2; display: flex; align-items: flex-end; justify-content: center; padding-bottom: 6px; }
```
